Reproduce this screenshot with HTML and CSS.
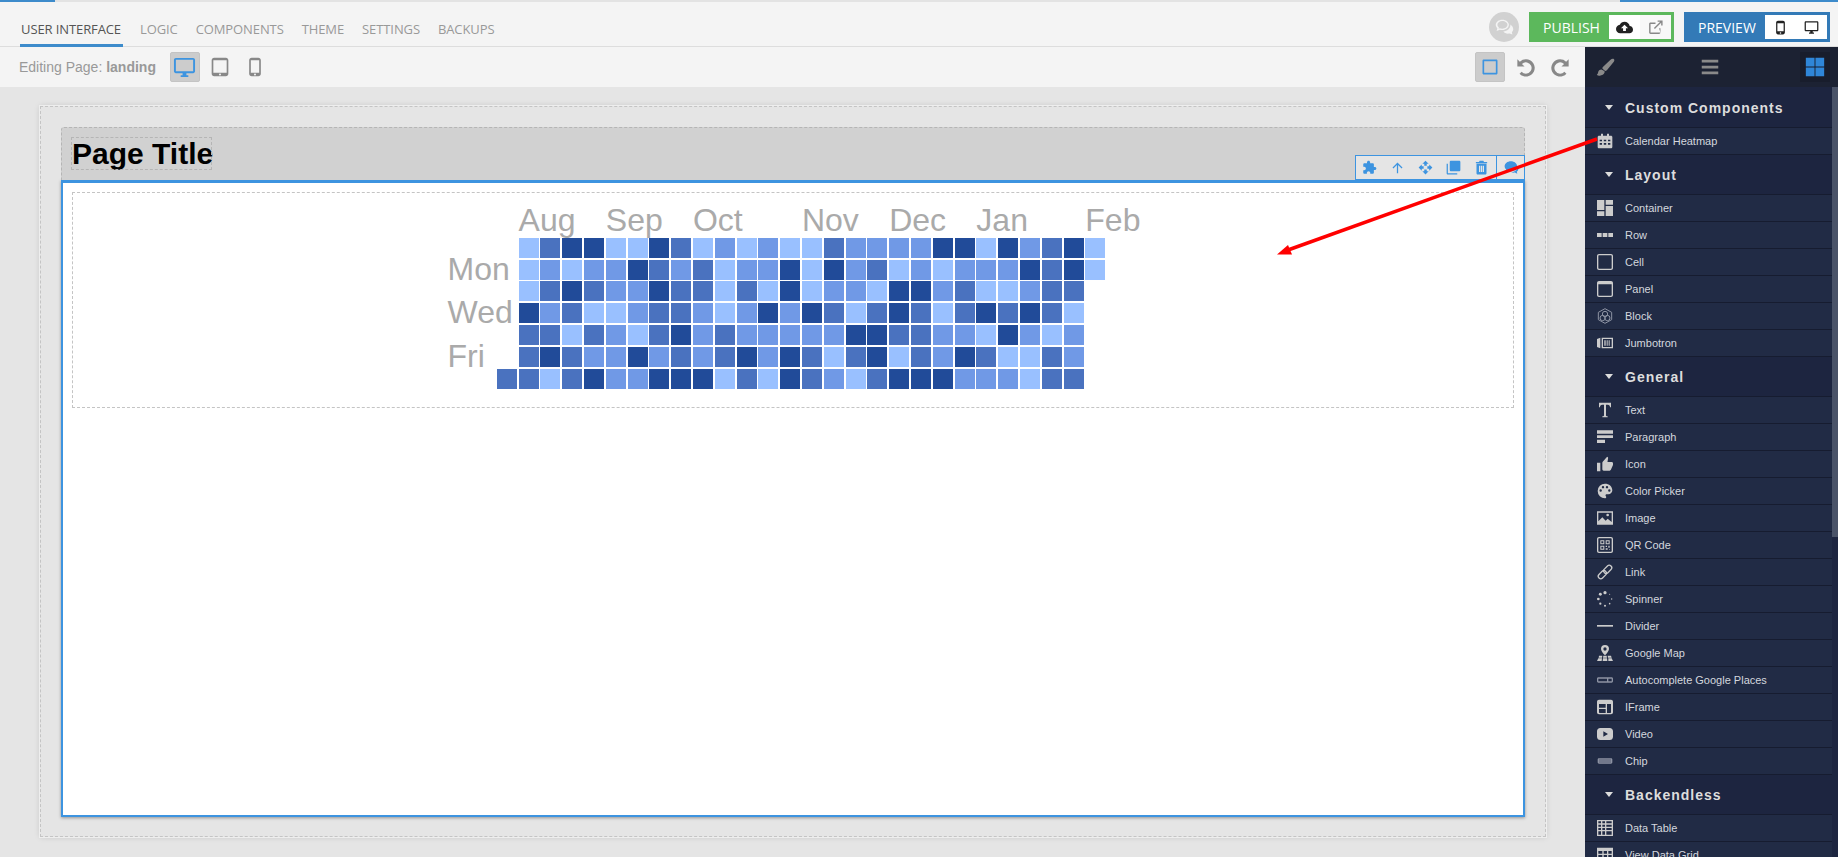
FILE: index.html
```html
<!DOCTYPE html>
<html lang="en">
<head>
    <meta charset="UTF-8">
    <title>User Interface</title>
    <link rel="stylesheet" href="styles.css">
</head>
<body>
<div class="topbar">
    <div class="load-line"><span class="load-left"></span><span class="load-right"></span></div>
    <div class="topbar-row">
        <div class="tabs">
            <a class="tab active">User Interface</a>
            <a class="tab">Logic</a>
            <a class="tab">Components</a>
            <a class="tab">Theme</a>
            <a class="tab">Settings</a>
            <a class="tab">Backups</a>
        </div>
        <div class="actions">
            <span class="chat-btn">
                <svg viewBox="0 0 24 24"><path d="M9.5 3C5.4 3 2 5.6 2 8.9c0 1.500.7 2.800 1.800 3.900L3 16l3.500-1.500c.9.300 1.900.400 3 .400 4.100 0 7.500-2.700 7.500-6S13.600 3 9.500 3zm0 1.600c3.400 0 5.900 2.100 5.900 4.300s-2.500 4.400-5.900 4.400c-1 0-1.900-.200-2.900-.500l-1.300.600.300-1.500c-1-.800-1.700-1.900-1.700-3 0-2.200 2.200-4.300 5.600-4.300z"/><path d="M18.600 8.500c.1.400.100.700.100 1 0 3.700-3.500 6.700-8 7 1.100 1.500 3.100 2.500 5.300 2.500.6 0 1.300-.100 1.900-.200L21 20l-.6-2.600c1-.9 1.600-2 1.600-3.300 0-2.400-1.400-4.500-3.400-5.600z"/></svg>
            </span>
            <div class="split-btn publish">
                <span class="split-label">PUBLISH</span>
                <span class="split-icons">
                    <span class="split-icon"><svg class="dark" viewBox="0 0 24 24"><path d="M19.350 10.040C18.670 6.590 15.640 4 12 4 9.110 4 6.600 5.640 5.350 8.040 2.340 8.360 0 10.910 0 14c0 3.310 2.690 6 6 6h13c2.760 0 5-2.240 5-5 0-2.640-2.050-4.780-4.650-4.960zM14 13v4h-4v-4H7l5-5 5 5h-3z"/></svg></span>
                    <span class="split-icon off"><svg class="grey" viewBox="0 0 24 24"><path d="M19 19H5V7h7V5H5c-1.110 0-2 .9-2 2v12c0 1.100.89 2 2 2h12c1.100 0 2-.9 2-2v-6h-2zM15 2v2h3.590l-8.830 8.830 1.410 1.410L20 5.410V9h2V2z"/></svg></span>
                </span>
            </div>
            <div class="split-btn preview">
                <span class="split-label">PREVIEW</span>
                <span class="split-icons">
                    <span class="split-icon"><svg class="dark" viewBox="0 0 24 24"><path d="M8 1h8c1.700 0 3 1.300 3 3v16c0 1.700-1.300 3-3 3H8c-1.700 0-3-1.300-3-3V4c0-1.700 1.300-3 3-3zm-1 4v13h10V5zm5 14.500a1.300 1.300 0 1 0 0 2.600 1.300 1.300 0 0 0 0-2.600z"/></svg></span>
                    <span class="split-icon"><svg class="dark" viewBox="0 0 24 24"><path d="M21 2H3c-1.100 0-2 .9-2 2v12c0 1.100.9 2 2 2h7v2H8v2h8v-2h-2v-2h7c1.100 0 2-.9 2-2V4c0-1.100-.9-2-2-2zm0 14H3V4h18v12z"/></svg></span>
                </span>
            </div>
        </div>
    </div>
</div>

<div class="main">
    <div class="workspace">
        <div class="toolbar">
            <div class="toolbar-left">
                <span class="page-name">Editing Page: <b>landing</b></span>
                <span class="tool-btn on"><svg class="blue big" viewBox="0 0 24 24"><path d="M21 2H3c-1.100 0-2 .9-2 2v12c0 1.100.9 2 2 2h7v2H8v2h8v-2h-2v-2h7c1.100 0 2-.9 2-2V4c0-1.100-.9-2-2-2zm0 14H3V4h18v12z"/></svg></span>
                <span class="tool-btn"><svg viewBox="0 0 24 24"><path d="M5 1h14c1.700 0 3 1.300 3 3v16c0 1.700-1.300 3-3 3H5c-1.700 0-3-1.300-3-3V4c0-1.700 1.300-3 3-3zm-1 3v15h16V4zm8 15.700a1.200 1.200 0 1 0 0 2.400 1.200 1.200 0 0 0 0-2.400z"/></svg></span>
                <span class="tool-btn"><svg viewBox="0 0 24 24"><path d="M8 1h8c1.700 0 3 1.300 3 3v16c0 1.700-1.300 3-3 3H8c-1.700 0-3-1.300-3-3V4c0-1.700 1.300-3 3-3zm-1 3v15h10V4zm5 15.700a1.200 1.200 0 1 0 0 2.400 1.200 1.200 0 0 0 0-2.400z"/></svg></span>
            </div>
            <div class="toolbar-right">
                <span class="tool-btn on"><svg class="blue" viewBox="0 0 24 24"><path d="M3 4.500C3 3.700 3.700 3 4.500 3h15c.8 0 1.500.7 1.500 1.500v15c0 .8-.7 1.500-1.500 1.500h-15c-.8 0-1.500-.7-1.500-1.500zM5 5v14h14V5z"/></svg></span>
                <span class="tool-btn"><svg class="big" viewBox="0 0 24 24"><path d="M12.500 3.500a9 9 0 0 0-6.400 2.600L3.500 3.500V11h7.500L8.300 8.300a5.900 5.900 0 1 1 4.200 10.100c-1.800 0-3.400-.8-4.500-2l-2.200 2a9 9 0 1 0 6.700-14.900z"/></svg></span>
                <span class="tool-btn"><svg class="big" viewBox="0 0 24 24"><path d="M11.500 3.500a9 9 0 0 1 6.400 2.600l2.600-2.600V11H13l2.700-2.700a5.900 5.900 0 1 0-4.200 10.100c1.800 0 3.400-.8 4.500-2l2.200 2a9 9 0 1 1-6.700-14.900z"/></svg></span>
            </div>
        </div>

        <div class="canvas">
            <div class="page-box">
                <div class="page-header">
                    <h1 class="page-title">Page Title</h1>
                    <div class="selection-bar">
                        <svg viewBox="0 0 24 24"><path d="M20.500 11H19V7c0-1.100-.9-2-2-2h-4V3.500C13 2.120 11.880 1 10.500 1S8 2.120 8 3.500V5H4c-1.100 0-1.990.9-1.990 2v3.800H3.500c1.490 0 2.700 1.210 2.700 2.700s-1.210 2.700-2.700 2.700H2V20c0 1.100.9 2 2 2h3.800v-1.500c0-1.490 1.210-2.700 2.700-2.700 1.490 0 2.700 1.210 2.700 2.700V22H17c1.100 0 2-.9 2-2v-4h1.500c1.380 0 2.500-1.120 2.500-2.500S21.880 11 20.500 11z"/></svg>
                        <svg viewBox="0 0 24 24"><path d="M4 12l1.410 1.410L11 7.830V21h2V7.830l5.580 5.590L20 12l-8-8-8 8z"/></svg>
                        <svg viewBox="0 0 24 24"><path d="M10 9h4V6h3l-5-5-5 5h3v3zm-1 1H6V7l-5 5 5 5v-3h3v-4zm14 2l-5-5v3h-3v4h3v3l5-5zm-9 3h-4v3H7l5 5 5-5h-3v-3z"/></svg>
                        <svg viewBox="0 0 24 24"><path d="M3 6H1v15c0 1.100.9 2 2 2h15v-2H3zM21 1H8c-1.100 0-2 .9-2 2v13c0 1.100.9 2 2 2h13c1.100 0 2-.9 2-2V3c0-1.100-.9-2-2-2z"/></svg>
                        <svg viewBox="0 0 24 24"><path d="M9 1h6l1 2h5v2H3V3h5zM4 6h16v15c0 1.100-.9 2-2 2H6c-1.100 0-2-.9-2-2zm4 3v10h2V9zm3 0v10h2V9zm3 0v10h2V9z"/></svg>
                        <span class="selection-sep"></span>
                        <svg viewBox="0 0 24 24"><path d="M11 2C5.500 2 1 5.600 1 10c0 2 .9 3.800 2.500 5.200L2.500 20l5-2.500c1.100.3 2.300.5 3.500.5 5.500 0 10-3.600 10-8s-4.500-8-10-8z"/><path d="M22 10.500c.6 1 1 2.200 1 3.500 0 1.900-.9 3.600-2.400 4.700l.6 3.300-3.900-1.900c-2 .4-4 .2-5.800-.6 5.200-.3 10.200-3.600 10.500-9z"/></svg>
                    </div>
                </div>
                <div class="page-body">
                    <div class="component-box">
                        <div class="heatmap">
                            <span class="month m-aug">Aug</span>
                            <span class="month m-sep">Sep</span>
                            <span class="month m-oct">Oct</span>
                            <span class="month m-nov">Nov</span>
                            <span class="month m-dec">Dec</span>
                            <span class="month m-jan">Jan</span>
                            <span class="month m-feb">Feb</span>
                            <div class="weeks">
                                <i></i><i class="l0"></i><i class="l2"></i><i class="l3"></i><i class="l3"></i><i class="l0"></i><i class="l0"></i><i class="l3"></i><i class="l2"></i><i class="l0"></i><i class="l1"></i><i class="l0"></i><i class="l1"></i><i class="l0"></i><i class="l0"></i><i class="l2"></i><i class="l1"></i><i class="l1"></i><i class="l1"></i><i class="l1"></i><i class="l3"></i><i class="l3"></i><i class="l0"></i><i class="l3"></i><i class="l1"></i><i class="l2"></i><i class="l3"></i><i class="l0"></i>
                                <i></i><i class="l0"></i><i class="l1"></i><i class="l0"></i><i class="l1"></i><i class="l1"></i><i class="l3"></i><i class="l2"></i><i class="l1"></i><i class="l2"></i><i class="l0"></i><i class="l1"></i><i class="l1"></i><i class="l3"></i><i class="l0"></i><i class="l3"></i><i class="l1"></i><i class="l2"></i><i class="l0"></i><i class="l1"></i><i class="l0"></i><i class="l1"></i><i class="l1"></i><i class="l1"></i><i class="l3"></i><i class="l2"></i><i class="l3"></i><i class="l0"></i>
                                <i></i><i class="l0"></i><i class="l2"></i><i class="l3"></i><i class="l2"></i><i class="l1"></i><i class="l1"></i><i class="l3"></i><i class="l2"></i><i class="l2"></i><i class="l0"></i><i class="l2"></i><i class="l0"></i><i class="l3"></i><i class="l0"></i><i class="l1"></i><i class="l1"></i><i class="l0"></i><i class="l3"></i><i class="l3"></i><i class="l1"></i><i class="l2"></i><i class="l0"></i><i class="l0"></i><i class="l1"></i><i class="l2"></i><i class="l2"></i><i></i>
                                <i></i><i class="l3"></i><i class="l1"></i><i class="l2"></i><i class="l0"></i><i class="l0"></i><i class="l1"></i><i class="l2"></i><i class="l2"></i><i class="l1"></i><i class="l0"></i><i class="l1"></i><i class="l3"></i><i class="l1"></i><i class="l3"></i><i class="l2"></i><i class="l0"></i><i class="l2"></i><i class="l3"></i><i class="l2"></i><i class="l0"></i><i class="l2"></i><i class="l3"></i><i class="l2"></i><i class="l3"></i><i class="l2"></i><i class="l0"></i><i></i>
                                <i></i><i class="l2"></i><i class="l2"></i><i class="l0"></i><i class="l2"></i><i class="l1"></i><i class="l0"></i><i class="l2"></i><i class="l3"></i><i class="l1"></i><i class="l2"></i><i class="l1"></i><i class="l1"></i><i class="l1"></i><i class="l1"></i><i class="l1"></i><i class="l3"></i><i class="l3"></i><i class="l2"></i><i class="l2"></i><i class="l1"></i><i class="l1"></i><i class="l0"></i><i class="l3"></i><i class="l1"></i><i class="l0"></i><i class="l1"></i><i></i>
                                <i></i><i class="l2"></i><i class="l3"></i><i class="l2"></i><i class="l1"></i><i class="l1"></i><i class="l3"></i><i class="l1"></i><i class="l2"></i><i class="l1"></i><i class="l2"></i><i class="l3"></i><i class="l1"></i><i class="l3"></i><i class="l2"></i><i class="l0"></i><i class="l2"></i><i class="l3"></i><i class="l0"></i><i class="l2"></i><i class="l1"></i><i class="l3"></i><i class="l2"></i><i class="l0"></i><i class="l0"></i><i class="l2"></i><i class="l1"></i><i></i>
                                <i class="l2"></i><i class="l2"></i><i class="l0"></i><i class="l2"></i><i class="l3"></i><i class="l1"></i><i class="l1"></i><i class="l3"></i><i class="l3"></i><i class="l3"></i><i class="l0"></i><i class="l2"></i><i class="l0"></i><i class="l3"></i><i class="l2"></i><i class="l1"></i><i class="l0"></i><i class="l2"></i><i class="l3"></i><i class="l3"></i><i class="l3"></i><i class="l1"></i><i class="l1"></i><i class="l1"></i><i class="l0"></i><i class="l2"></i><i class="l2"></i><i></i>
                            </div>
                            <span class="day d-mon">Mon</span>
                            <span class="day d-wed">Wed</span>
                            <span class="day d-fri">Fri</span>
                        </div>
                    </div>
                </div>
            </div>
        </div>
    </div>

    <div class="sidebar">
        <div class="side-tabs">
            <svg class="brush" viewBox="0 0 24 24"><path d="M22.500 1.200c-1.200-.8-3 0-4.500 1.300L9 11c-.7.7-1 1.500-1 2.200l3.500 3.300c1-.1 1.800-.5 2.500-1.300l8-9.700c1.200-1.500 1.700-3.300.5-4.300z"/><path d="M7 14.500c-2.500 0-4 1.500-4.300 3.500C2.500 19.500 2 20.500 1 21c1.500 1.500 5 1.800 7.500.3 2-1.200 2.700-3 2.300-4.500z"/></svg>
            <svg class="burger" viewBox="0 0 24 24"><path d="M3 4h18v3H3zM3 10.500h18v3H3zM3 17h18v3H3z"/></svg>
            <span class="side-tab-on"><svg viewBox="0 0 24 24"><path d="M2 2h9.500v9.500H2zM12.500 2H22v9.500h-9.500zM2 12.500h9.500V22H2zM12.500 12.500H22V22h-9.500z"/></svg></span>
        </div>
        <div class="side-scroll">
            <div class="side-list">
                <div class="section"><span class="caret"></span>Custom Components</div>
                <div class="item"><svg viewBox="0 0 24 24"><path d="M6 1h3v3h6V1h3v3h3c1 0 2 1 2 2v15c0 1-1 2-2 2H3c-1 0-2-1-2-2V6c0-1 1-2 2-2h3zM4 10v2.500h3.500V10zm6.200 0v2.500h3.600V10zm6.300 0v2.500H20V10zM4 15v2.500h3.500V15zm6.200 0v2.500h3.600V15zm6.300 0v2.500H20V15z"/></svg>Calendar Heatmap</div>

                <div class="section"><span class="caret"></span>Layout</div>
                <div class="item"><svg viewBox="0 0 24 24"><path d="M0 0h11v15H0zM13 0h11v7H13zM13 9h11v15H13zM0 17h11v7H0z"/></svg>Container</div>
                <div class="item"><svg viewBox="0 0 24 24"><path d="M0 9h7v6H0zM8.500 9h7v6h-7zM17 9h7v6h-7z"/></svg>Row</div>
                <div class="item"><svg viewBox="0 0 24 24"><path fill-rule="evenodd" d="M3 0h18c1.700 0 3 1.300 3 3v18c0 1.700-1.300 3-3 3H3c-1.700 0-3-1.300-3-3V3c0-1.700 1.300-3 3-3zm0 2c-.6 0-1 .4-1 1v18c0 .6.4 1 1 1h18c.6 0 1-.4 1-1V3c0-.6-.4-1-1-1z"/></svg>Cell</div>
                <div class="item"><svg viewBox="0 0 24 24"><path fill-rule="evenodd" d="M3 0h18c1.700 0 3 1.300 3 3v18c0 1.700-1.300 3-3 3H3c-1.700 0-3-1.300-3-3V3c0-1.700 1.300-3 3-3zM2 5v16c0 .6.4 1 1 1h18c.6 0 1-.4 1-1V5z"/></svg>Panel</div>
                <div class="item"><svg class="line faint" viewBox="0 0 24 24" stroke-width="1.500"><path d="M12 1l10 5.500v11L12 23 2 17.500v-11z"/><circle cx="12" cy="9" r="4"/><circle cx="8.500" cy="15" r="4"/><circle cx="15.500" cy="15" r="4"/></svg>Block</div>
                <div class="item"><svg viewBox="0 0 24 24"><path fill-rule="evenodd" d="M0 6l5-2v16l-5-2zM7 4h17v16H7zm2 2v12h13V6zm2 2h2v8h-2zm3.500 0h1.500v8h-1.500zm3 0h1.500v8h-1.500z"/></svg>Jumbotron</div>

                <div class="section"><span class="caret"></span>General</div>
                <div class="item"><svg viewBox="0 0 24 24"><path d="M3 1h18v7h-1.500c0-2.500-1-4-3.500-4h-2.500v16c0 1 .5 1.500 2.500 1.500V23H8v-1.500c2 0 2.500-.5 2.500-1.500V4H8C5.500 4 4.500 5.500 4.500 8H3z"/></svg>Text</div>
                <div class="item"><svg viewBox="0 0 24 24"><path d="M0 2h24v5H0zM0 9.500h24v4H0zM0 16h12v5H0z"/></svg>Paragraph</div>
                <div class="item"><svg viewBox="0 0 24 24"><path d="M0 10h5v13H0zM24 11c0-1.100-.9-2-2-2h-6.310l.95-5.570.03-.32c0-.41-.17-.79-.44-1.060L15.170 1 8.590 8.590C8.220 8.950 8 9.450 8 10v10c0 1.100.9 2 2 2h9c.83 0 1.540-.5 1.800-1.220l3.020-7.050c.08-.23.180-.47.180-.73z"/></svg>Icon</div>
                <div class="item"><svg viewBox="0 0 24 24"><path d="M12 1a11 11 0 0 0 0 22c1 0 1.800-.8 1.800-1.800 0-.5-.2-.9-.5-1.200-.3-.3-.5-.7-.5-1.200 0-1 .8-1.800 1.800-1.800H17c3.300 0 6-2.700 6-6C23 4.800 18 1 12 1zM5.500 13a1.800 1.800 0 1 1 0-3.600 1.800 1.800 0 0 1 0 3.600zm3.500-5a1.800 1.800 0 1 1 0-3.600A1.800 1.800 0 0 1 9 8zm6 0a1.800 1.800 0 1 1 0-3.600A1.800 1.800 0 0 1 15 8zm3.500 5a1.800 1.800 0 1 1 0-3.600 1.800 1.800 0 0 1 0 3.600z"/></svg>Color Picker</div>
                <div class="item"><svg viewBox="0 0 24 24"><path fill-rule="evenodd" d="M0 2h24v20H0zM2 4v13l6-6 5 5 3-3 6 5V4zm14 1.500a2 2 0 1 1 0 4 2 2 0 0 1 0-4z"/></svg>Image</div>
                <div class="item"><svg viewBox="0 0 24 24"><path fill-rule="evenodd" d="M3 0h18c1.700 0 3 1.300 3 3v18c0 1.700-1.300 3-3 3H3c-1.700 0-3-1.300-3-3V3c0-1.700 1.300-3 3-3zm0 2c-.6 0-1 .4-1 1v18c0 .6.4 1 1 1h18c.6 0 1-.4 1-1V3c0-.6-.4-1-1-1zm2 3h6v6H5zm1.500 1.500v3h3v-3zM13 5h6v6h-6zm1.500 1.500v3h3v-3zM5 13h6v6H5zm1.500 1.500v3h3v-3zM13 13h2v2h-2zm4 0h2v3h-2zm-4 4h3v2h-3zm5 1h1v1h-1z"/></svg>QR Code</div>
                <div class="item"><svg class="line" viewBox="0 0 24 24" stroke-width="2"><rect x="12.250" y="1" width="7.500" height="14" rx="3.700" transform="rotate(45 16 8)"/><rect x="4.250" y="9" width="7.500" height="14" rx="3.700" transform="rotate(45 8 16)"/></svg>Link</div>
                <div class="item"><svg viewBox="0 0 24 24"><circle cx="12" cy="2.500" r="2.400"/><circle cx="5" cy="5" r="2.200"/><circle cx="2" cy="12" r="2"/><circle cx="5" cy="19" r="1.700"/><circle cx="12" cy="22" r="1.500"/><circle cx="19" cy="19" r="1.200"/><circle cx="22" cy="12" r="1"/><circle cx="19" cy="5" r=".8"/></svg>Spinner</div>
                <div class="item"><svg viewBox="0 0 24 24"><path d="M0 10.500h24v2.500H0z"/></svg>Divider</div>
                <div class="item"><svg viewBox="0 0 24 24"><path fill-rule="evenodd" d="M12 0a6 6 0 0 1 6 6c0 3-3.500 7-6 9.500C9.500 13 6 9 6 6a6 6 0 0 1 6-6zm0 3.500a2.500 2.500 0 1 0 0 5 2.500 2.500 0 0 0 0-5zM3 16h5l-.5 3H2.500zm13 0h5l1 3h-5.500zm-6.500 0h5l.5 3H9zM2 20h5.500l-.5 4H0zm7 0h6l.5 4h-7zm8 0h5l2 4h-7z"/></svg>Google Map</div>
                <div class="item"><svg class="faint" viewBox="0 0 24 24"><path fill-rule="evenodd" d="M2 8h20c1 0 2 1 2 2v4c0 1-1 2-2 2H2c-1 0-2-1-2-2v-4c0-1 1-2 2-2zm0 2v4h13v-4zm15 0v4h5v-4z"/></svg>Autocomplete Google Places</div>
                <div class="item"><svg viewBox="0 0 24 24"><path fill-rule="evenodd" d="M3 1h18c1.700 0 3 1.300 3 3v16c0 1.700-1.300 3-3 3H3c-1.700 0-3-1.300-3-3V4c0-1.700 1.300-3 3-3zm0 6.500V20c0 .6.4 1 1 1h9v-6H3v-2h10V7.500zm12 0V21h5c.6 0 1-.4 1-1V7.500z"/></svg>IFrame</div>
                <div class="item"><svg viewBox="0 0 24 24"><path fill-rule="evenodd" d="M5 3h14c3 0 5 2 5 5v8c0 3-2 5-5 5H5c-3 0-5-2-5-5V8c0-3 2-5 5-5zm4.500 5v8l7-4z"/></svg>Video</div>
                <div class="item"><svg class="faint" viewBox="0 0 24 24"><path fill-rule="evenodd" d="M3 8h18c1.200 0 2 .8 2 2v4c0 1.200-.8 2-2 2H3c-1.200 0-2-.8-2-2v-4c0-1.200.8-2 2-2zm0 2v1h18v-1zm0 3v1h18v-1z"/></svg>Chip</div>

                <div class="section"><span class="caret"></span>Backendless</div>
                <div class="item"><svg viewBox="0 0 24 24"><path fill-rule="evenodd" d="M0 0h24v24H0zm2 2v3h4V2zm6 0v3h4V2zm6 0v3h8V2zM2 7v3h4V7zm6 0v3h4V7zm6 0v3h8V7zM2 12v3h4v-3zm6 0v3h4v-3zm6 0v3h8v-3zM2 17v5h4v-5zm6 0v5h4v-5zm6 0v5h8v-5z"/></svg>Data Table</div>
                <div class="item"><svg viewBox="0 0 24 24"><path fill-rule="evenodd" d="M0 1h24v22H0zm2 5v4h6V6zm8 0v4h5V6zm7 0v4h5V6zM2 12v4h6v-4zm8 0v4h5v-4zm7 0v4h5v-4z"/></svg>View Data Grid</div>
            </div>
            <div class="side-scrollbar"><span class="side-thumb"></span></div>
        </div>
    </div>
</div>

<!-- the red arrow drawn over the screenshot -->
<svg class="arrow" viewBox="0 0 1838 857">
    <path d="M1597 139L1288 250" stroke="#ff0000" stroke-width="3.500" fill="none"/>
    <path d="M1277 254.500L1288 245L1292 254.500z" fill="#ff0000"/>
</svg>
</body>
</html>
```

FILE: styles.css
```css
* {
    box-sizing: border-box;
}

html, body {
    height: 100%;
}

body {
    margin: 0;
    overflow: hidden;
    display: flex;
    flex-direction: column;
    font-family: "Liberation Sans", Arial, sans-serif;
    background-color: #e5e5e5;
}

svg {
    fill: currentColor;
    display: block;
}

svg.line {
    fill: none;
    stroke: currentColor;
}

/* top bar */
.topbar {
    height: 47px;
    background-color: #f4f4f4;
    border-bottom: 1px solid #dddddd;
}

.load-line {
    height: 2px;
    background-color: #e3e3e3;
    display: flex;
    justify-content: space-between;
}

.load-left {
    width: 55px;
    background-color: #3d8bcb;
}

.load-right {
    width: 218px;
    background-color: #3d8bcb;
}

.topbar-row {
    height: 44px;
    display: flex;
    justify-content: space-between;
    padding: 0 8px 0 20px;
}

.tabs {
    display: flex;
    gap: 16px;
    margin-top: 18px;
}

.tab {
    height: 27px;
    padding: 0 1px;
    font-family: "Open Sans", sans-serif;
    font-size: 13px;
    line-height: 19px;
    letter-spacing: -0.1px;
    text-transform: uppercase;
    color: #999999;
}

.tab.active {
    padding-right: 2px;
    color: #555555;
    border-bottom: 3px solid #3d8bcb;
}

.actions {
    display: flex;
    align-items: center;
    gap: 10px;
    padding-top: 6px;
}

.chat-btn {
    width: 30px;
    height: 30px;
    border-radius: 50%;
    background-color: #d1d1d1;
    color: #f4f4f4;
    display: flex;
    align-items: center;
    justify-content: center;
}

.chat-btn svg {
    width: 21px;
    height: 21px;
}

.split-btn {
    height: 30px;
    display: flex;
    align-items: center;
    justify-content: space-between;
    padding: 3px;
    color: #fff;
}

.publish {
    width: 145px;
    background-color: #5cb85c;
}

.preview {
    width: 146px;
    background-color: #337ab7;
}

.split-label {
    font-family: "Open Sans", sans-serif;
    font-size: 14px;
    padding-left: 11px;
}

.split-icons {
    display: flex;
    height: 24px;
}

.split-icon {
    width: 31px;
    background-color: #fff;
    display: flex;
    align-items: center;
    justify-content: center;
}

.split-icon.off {
    background-color: #f8f8f8;
}

.split-icon svg {
    width: 17px;
    height: 17px;
}

.preview .split-icon svg {
    width: 15px;
    height: 15px;
}

.dark {
    color: #222222;
}

.grey {
    color: #888888;
}

/* main area */
.main {
    flex: 1;
    min-height: 0;
    display: flex;
}

.workspace {
    flex: 1;
    min-width: 0;
    display: flex;
    flex-direction: column;
}

.toolbar {
    height: 40px;
    flex: none;
    background-color: #f4f4f4;
    display: flex;
    justify-content: space-between;
    align-items: center;
    padding: 0 10px 0 19px;
}

.toolbar-left, .toolbar-right {
    display: flex;
    align-items: center;
    gap: 5px;
}

.page-name {
    font-size: 14px;
    color: #999999;
    margin-right: 9px;
}

.tool-btn {
    width: 30px;
    height: 30px;
    color: #888888;
    display: flex;
    align-items: center;
    justify-content: center;
    border-radius: 2px;
}

.tool-btn svg {
    width: 20px;
    height: 20px;
}

.tool-btn svg.big {
    width: 23px;
    height: 23px;
}

.tool-btn.on {
    background-color: #cccccc;
    border: 1px solid #c4c4c4;
}

.blue {
    color: #3d94e0;
}

/* canvas */
.canvas {
    flex: 1;
    min-height: 0;
    padding: 19px 39px 20px 40px;
}

.page-box {
    height: 100%;
    padding: 20px 20px 19px 20px;
    border: 1px dashed #c4c4c4;
    outline: 1px solid #eeeeee;
    box-shadow: 0 0 6px rgba(0, 0, 0, 0.15);
    display: flex;
    flex-direction: column;
}

.page-header {
    position: relative;
    height: 53px;
    flex: none;
    padding: 10px 10px;
    background-color: #d1d1d1;
    border: 1px dashed #b5b5b5;
    border-bottom: none;
    border-radius: 3px 3px 0 0;
}

.page-title {
    margin: 0;
    width: 139px;
    height: 31px;
    font-size: 30px;
    line-height: 31px;
    color: #000;
    outline: 1px dashed #b5b5b5;
    white-space: nowrap;
}

.selection-bar {
    position: absolute;
    right: -1px;
    bottom: 0;
    width: 170px;
    height: 25px;
    display: flex;
    align-items: center;
    padding-left: 6px;
    gap: 13px;
    color: #3d94e0;
    background-color: #e5e5e5;
    border: 1px solid #3d94e0;
}

.selection-bar svg {
    width: 15px;
    height: 15px;
    flex: none;
}

.selection-sep {
    width: 1px;
    height: 100%;
    background-color: #3d94e0;
    margin: 0 -6px;
}

.page-body {
    flex: 1;
    padding: 9px;
    background-color: #fff;
    border: 2px solid #3d94e0;
    border-top-width: 3px;
    box-shadow: 0 1px 3px rgba(0, 0, 0, 0.35);
}

.component-box {
    height: 216px;
    padding-top: 11px;
    border: 1px dashed #c4c4c4;
}

/* heatmap */
.heatmap {
    width: 691px;
    margin: 0 auto;
    display: grid;
    grid-template-columns: 47.5px repeat(28, 20px);
    grid-template-rows: 32px repeat(7, 20px);
    gap: 1.8px;
    color: #aaaaaa;
    font-size: 32px;
}

.month {
    grid-row: 1;
    line-height: 32px;
    white-space: nowrap;
}

.m-aug { grid-column: 3; }
.m-sep { grid-column: 7; }
.m-oct { grid-column: 11; }
.m-nov { grid-column: 16; }
.m-dec { grid-column: 20; }
.m-jan { grid-column: 24; }
.m-feb { grid-column: 29; }

.day {
    grid-column: 1 / span 2;
    line-height: 18px;
    white-space: nowrap;
}

.d-mon { grid-row: 3; }
.d-wed { grid-row: 5; }
.d-fri { grid-row: 7; }

.weeks {
    grid-column: 2 / -1;
    grid-row: 2 / -1;
    display: grid;
    grid-template-columns: repeat(28, 20px);
    grid-auto-rows: 20px;
    gap: 1.8px;
}

.l0 { background-color: #99c0ff; }
.l1 { background-color: #7099e6; }
.l2 { background-color: #4a72bf; }
.l3 { background-color: #214b99; }

/* sidebar */
.sidebar {
    width: 253px;
    flex: none;
    display: flex;
    flex-direction: column;
    background-color: #1d2540;
}

.side-tabs {
    height: 40px;
    flex: none;
    background-color: #1c2233;
    display: flex;
    align-items: center;
    justify-content: space-between;
    padding: 0 8px 0 11px;
    color: #8a8a8a;
}

.side-tabs .brush {
    width: 19px;
    height: 19px;
}

.side-tabs .burger {
    width: 22px;
    height: 22px;
    margin-left: 5px;
}

.side-tab-on {
    width: 30px;
    height: 30px;
    background-color: #181d2c;
    display: flex;
    align-items: center;
    justify-content: center;
    color: #2f86d8;
}

.side-tab-on svg {
    width: 22px;
    height: 22px;
}

.side-scroll {
    flex: 1;
    min-height: 0;
    display: flex;
    overflow: hidden;
}

.side-list {
    flex: 1;
    min-width: 0;
    padding-top: 1px;
}

.side-scrollbar {
    width: 6px;
    flex: none;
}

.side-thumb {
    display: block;
    height: 450px;
    background-color: #4a5368;
}

.section {
    height: 40px;
    display: flex;
    align-items: center;
    padding-left: 20px;
    font-size: 14px;
    font-weight: bold;
    letter-spacing: 1px;
    color: #dddddd;
    border-bottom: 1px solid #161c30;
}

.caret {
    width: 0;
    height: 0;
    margin-right: 12px;
    border-left: 4.5px solid transparent;
    border-right: 4.5px solid transparent;
    border-top: 5px solid #dddddd;
}

.item {
    height: 27px;
    display: flex;
    align-items: center;
    gap: 12px;
    padding-left: 12px;
    font-size: 11px;
    color: #d4d7de;
    background-color: #212b45;
    border-bottom: 1px solid #161c30;
}

.item svg {
    width: 16px;
    height: 16px;
    flex: none;
    color: #cccccc;
}

.item svg.faint {
    color: #8d93a3;
}

/* red arrow */
.arrow {
    position: absolute;
    top: 0;
    left: 0;
    width: 1838px;
    height: 857px;
    fill: none;
    pointer-events: none;
}
```
